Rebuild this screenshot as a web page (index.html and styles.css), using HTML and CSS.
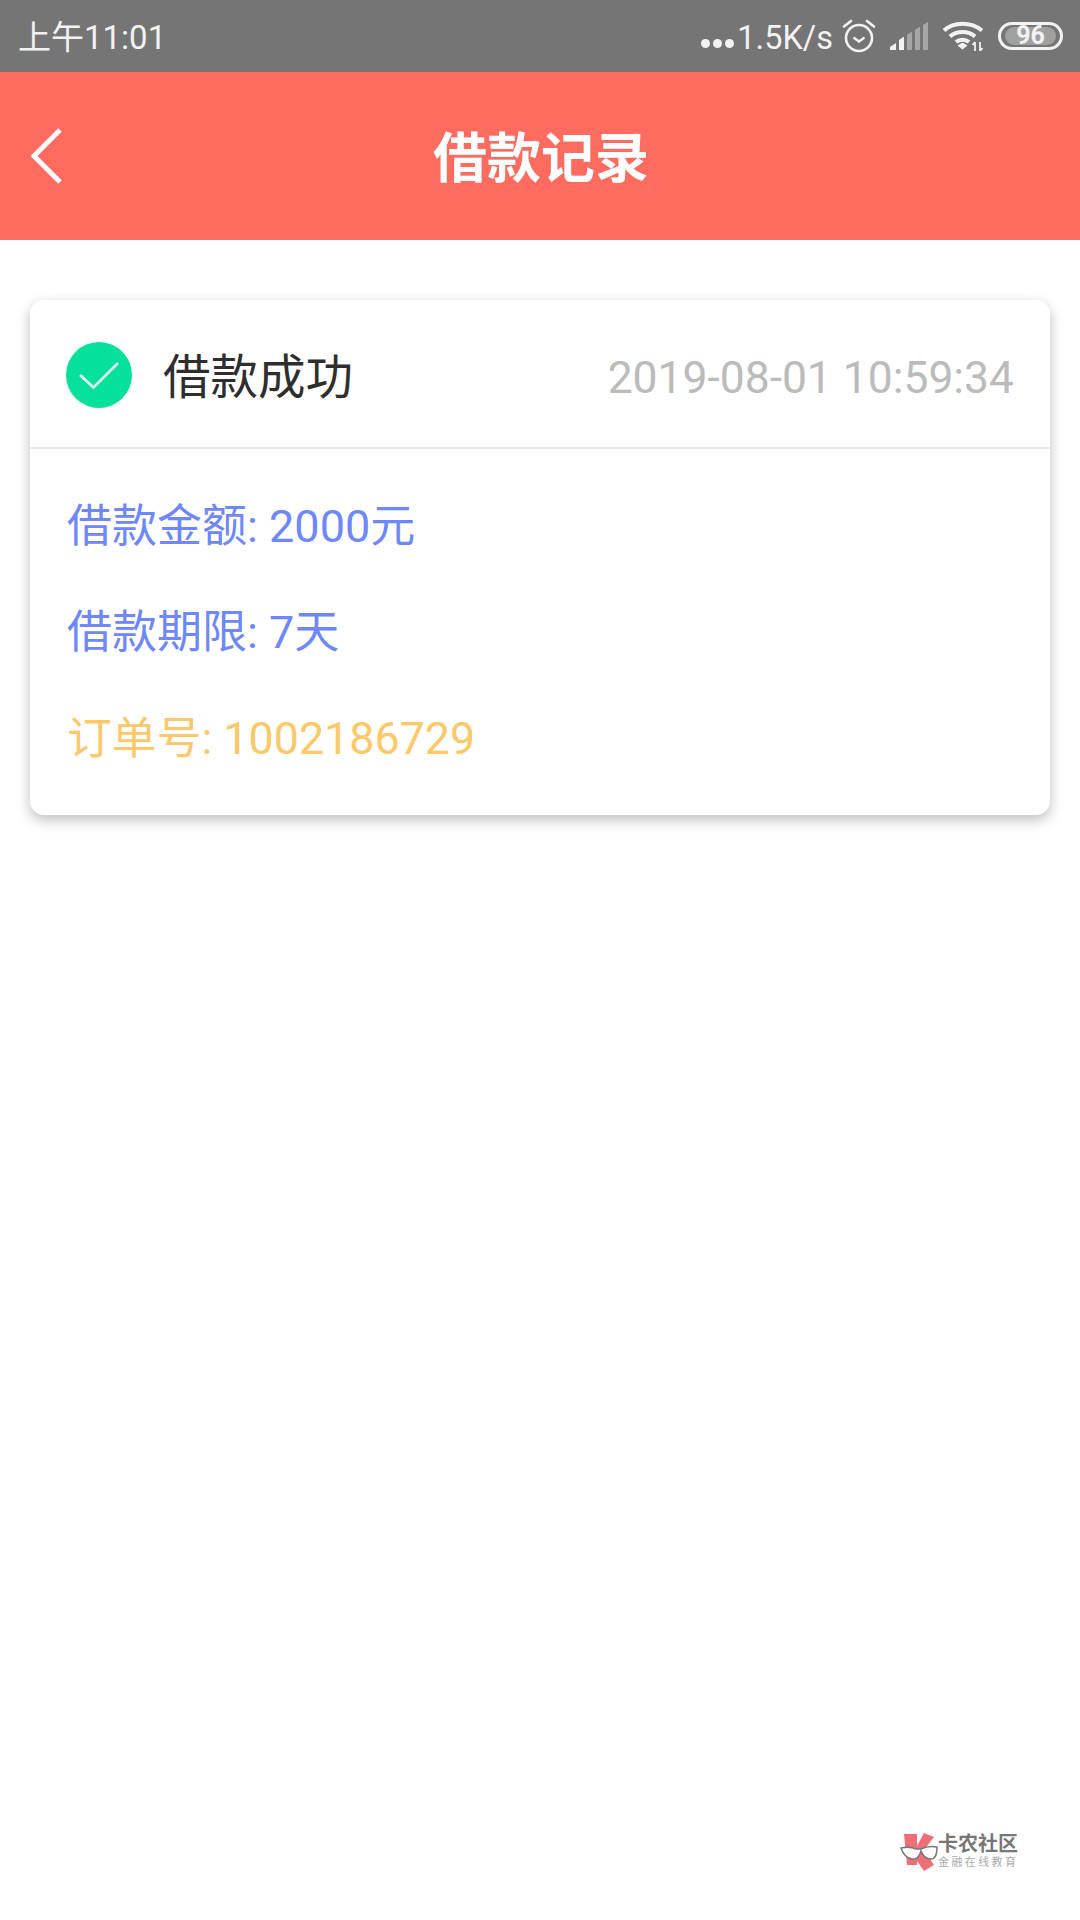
FILE: index.html
```html
<!DOCTYPE html>
<html lang="zh-CN">
<head>
    <meta charset="UTF-8">
    <meta name="viewport" content="width=device-width, initial-scale=1.0">
    <title>借款记录</title>
    <link rel="stylesheet" href="styles.css">
</head>
<body>

<div class="status-bar">
    <span class="status-time">上午11:01</span>
    <div class="status-right">
        <span class="status-dots"><i></i><i></i><i></i></span>
        <span class="status-speed">1.5K/s</span>
        <svg class="icon-alarm" width="34" height="34" viewBox="0 0 34 34" fill="none" stroke="#f2f2f2" stroke-width="2.6">
            <circle cx="17" cy="19" r="13"/>
            <path d="M11.500 18.500l5.500 4 5.500-4" stroke-width="2.400"/>
            <path d="M2 7.500L9 2M32 7.500L25 2" stroke-linecap="round"/>
        </svg>
        <svg class="icon-signal" width="38" height="28" viewBox="0 0 38 28">
            <path d="M0 28v-3l6-4v7z" fill="#f2f2f2"/>
            <path d="M9 28V18l5-3.500V28z" fill="#f2f2f2"/>
            <path d="M17 28V13l5-3.500V28z" fill="#a6a6a6"/>
            <path d="M25 28V8l5-3.500V28z" fill="#a6a6a6"/>
            <path d="M33 28V3l5-3v28z" fill="#a6a6a6"/>
        </svg>
        <svg class="icon-wifi" width="42" height="30" viewBox="0 0 42 30" fill="none" stroke="#f2f2f2" stroke-width="4">
            <path d="M2 9.500C12 0.500 29 0.500 40 9.500"/>
            <path d="M8 15.500C14.500 9.500 26.500 9.500 33 15.500"/>
            <path d="M14 21C17.500 18 23.500 18 27 21"/>
            <path d="M15.500 24.500l5-3 5 3-5 4z" fill="#f2f2f2" stroke="none"/>
            <path d="M33 21v9M30.500 24l2.500-3M38 21v9M40.500 27l-2.500 3" stroke-width="1.800"/>
        </svg>
        <div class="battery"><div class="battery-fill">96</div></div>
    </div>
</div>

<div class="title-bar">
    <svg class="icon-back" width="34" height="58" viewBox="0 0 34 58" fill="none" stroke="#fff" stroke-width="5">
        <path d="M31 3L5 29l26 26"/>
    </svg>
    <h1>借款记录</h1>
</div>

<div class="card">
    <div class="card-head">
        <svg class="icon-ok" width="66" height="66" viewBox="0 0 66 66">
            <circle cx="33" cy="33" r="33" fill="#05e09a"/>
            <path d="M14 33l13.500 12.500L52 21" fill="none" stroke="#e6fbf4" stroke-width="2.600"/>
        </svg>
        <span class="card-state">借款成功</span>
        <span class="card-date">2019-08-01 10:59:34</span>
    </div>
    <div class="card-body">
        <p class="row blue">借款金额: 2000元</p>
        <p class="row blue">借款期限: 7天</p>
        <p class="row yellow">订单号: 1002186729</p>
    </div>
</div>

<!-- watermark -->
<div class="mark">
    <svg width="38" height="40" viewBox="0 0 38 40">
        <path d="M4 2h13v12L24 1l10 4-10 13 10 15-10 6-7-10v4H7z" fill="#ee6f78"/>
        <path d="M1 16c5-1 11-1 15 1h5c4-2 10-3 16-2 0 8-2 12-6 12s-8-3-10-8c-1 5-5 9-9 8-6-1-9-5-11-11z" fill="#fff" stroke="#777" stroke-width="1.500"/>
    </svg>
    <div class="mark-text">
        <div class="mark-name">卡农社区</div>
        <div class="mark-sub">金融在线教育</div>
    </div>
</div>

</body>
</html>
```

FILE: styles.css
```css
* {
    box-sizing: border-box;
}
html, body {
    height: 100%;
}
body {
    margin: 0;
    position: relative;
    background-color: #fff;
    font-family: Roboto, "Noto Sans CJK SC", sans-serif;
}
.status-bar {
    height: 72px;
    background-color: #757575;
    color: #f2f2f2;
    display: flex;
    align-items: center;
    justify-content: space-between;
    padding: 0 17px 0 18px;
}
.status-time {
    font-size: 33px;
    margin-bottom: 2px;
}
.status-right {
    display: flex;
    align-items: center;
}
.status-dots {
    display: flex;
    gap: 3px;
    margin-top: 14px;
    margin-right: 3px;
}
.status-dots i {
    width: 9px;
    height: 9px;
    border-radius: 50%;
    background-color: #f2f2f2;
}
.status-speed {
    font-size: 32.500px;
    margin-top: 3px;
    margin-right: 9px;
}
.icon-signal {
    margin-left: 14px;
}
.icon-wifi {
    margin-left: 14px;
}
.battery {
    width: 65px;
    height: 28px;
    margin-left: 14px;
    padding: 2px 4px;
    border: 3px solid #f2f2f2;
    border-radius: 14px;
}
.battery-fill {
    height: 18px;
    background-color: #a0a0a0;
    border-radius: 9px;
    font-size: 25px;
    font-weight: 700;
    line-height: 18px;
    text-align: center;
}
.title-bar {
    height: 168px;
    background-color: #ff6b5f;
    display: flex;
    align-items: center;
    justify-content: center;
    position: relative;
}
.icon-back {
    position: absolute;
    left: 29px;
    top: 55px;
}
.title-bar h1 {
    margin: 0 0 4px;
    padding-left: 2px;
    color: #fff;
    font-size: 54px;
    font-weight: 700;
}
.card {
    margin: 60px 30px 0;
    background-color: #fff;
    border-radius: 14px;
    box-shadow: 0 5px 14px rgba(0, 0, 0, 0.26);
}
.card-head {
    height: 149px;
    border-bottom: 2px solid #e8e8e8;
    display: flex;
    align-items: center;
    padding: 0 36px;
}
.icon-ok {
    margin-top: 2px;
}
.card-state {
    margin-left: 31px;
    font-size: 47.500px;
    color: #2e2e2e;
}
.card-date {
    margin-left: auto;
    margin-top: 8px;
    font-size: 44.400px;
    color: #bbb;
}
.card-body {
    padding: 25px 37px 23px;
}
.row {
    margin: 0;
    height: 106px;
    line-height: 106px;
    font-size: 45px;
}
.blue {
    color: #6e87fb;
}
.yellow {
    color: #fcc868;
    font-size: 44.800px;
}
.mark {
    position: absolute;
    left: 900px;
    top: 1832px;
    display: flex;
}
.mark-name {
    font-size: 20px;
    line-height: 24px;
    font-weight: 700;
    color: #777;
}
.mark-sub {
    font-size: 11px;
    line-height: 14px;
    letter-spacing: 2.400px;
    color: #aaa;
}
```
